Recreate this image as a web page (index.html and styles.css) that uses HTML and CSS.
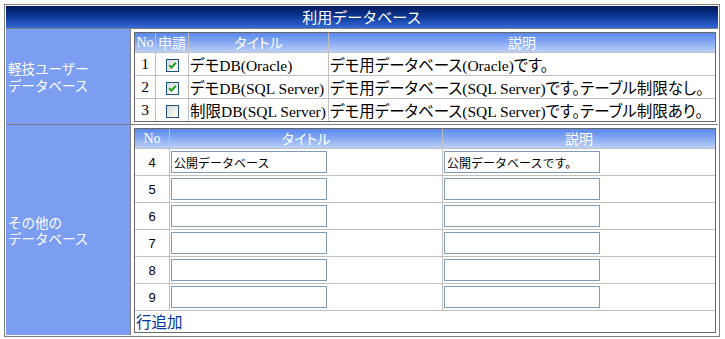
FILE: index.html
```html
<!DOCTYPE html>
<html lang="ja">
<head>
    <meta charset="UTF-8">
    <title>利用データベース</title>
    <link rel="stylesheet" href="styles.css">
</head>
<body>
    <div class="panel">
        <table class="layout">
            <colgroup>
                <col class="col-label">
                <col>
            </colgroup>
            <tr>
                <th class="panel-title" colspan="2">利用データベース</th>
            </tr>
            <tr class="group-first">
                <td class="group-label">軽技ユーザー<br>データベース</td>
                <td class="group-body">
                    <table class="grid">
                        <tr class="grid-head">
                            <th class="col-no">No</th>
                            <th class="col-apply">申請</th>
                            <th class="col-title">タイトル</th>
                            <th>説明</th>
                        </tr>
                        <tr class="row-db">
                            <td class="num">1</td>
                            <td class="center"><span class="box"><svg viewBox="0 0 11 11" width="11" height="11"><path d="M2.2 5.2 L4.4 7.6 L8.8 2.8" /></svg></span></td>
                            <td>デモDB(Oracle)</td>
                            <td>デモ用データベース(Oracle)です。</td>
                        </tr>
                        <tr class="row-db">
                            <td class="num">2</td>
                            <td class="center"><span class="box"><svg viewBox="0 0 11 11" width="11" height="11"><path d="M2.2 5.2 L4.4 7.6 L8.8 2.8" /></svg></span></td>
                            <td>デモDB(SQL Server)</td>
                            <td>デモ用データベース(SQL Server)です。テーブル制限なし。</td>
                        </tr>
                        <tr class="row-db">
                            <td class="num">3</td>
                            <td class="center"><span class="box"></span></td>
                            <td>制限DB(SQL Server)</td>
                            <td>デモ用データベース(SQL Server)です。テーブル制限あり。</td>
                        </tr>
                    </table>
                </td>
            </tr>
            <tr class="group-second">
                <td class="group-label">その他の<br>データベース</td>
                <td class="group-body">
                    <table class="grid">
                        <tr class="grid-head">
                            <th class="col-no2">No</th>
                            <th class="col-half">タイトル</th>
                            <th>説明</th>
                        </tr>
                        <tr class="row-edit">
                            <td class="num2">4</td>
                            <td><input class="field" type="text" value="公開データベース"></td>
                            <td><input class="field" type="text" value="公開データベースです。"></td>
                        </tr>
                        <tr class="row-edit">
                            <td class="num2">5</td>
                            <td><input class="field" type="text"></td>
                            <td><input class="field" type="text"></td>
                        </tr>
                        <tr class="row-edit">
                            <td class="num2">6</td>
                            <td><input class="field" type="text"></td>
                            <td><input class="field" type="text"></td>
                        </tr>
                        <tr class="row-edit">
                            <td class="num2">7</td>
                            <td><input class="field" type="text"></td>
                            <td><input class="field" type="text"></td>
                        </tr>
                        <tr class="row-edit">
                            <td class="num2">8</td>
                            <td><input class="field" type="text"></td>
                            <td><input class="field" type="text"></td>
                        </tr>
                        <tr class="row-edit">
                            <td class="num2">9</td>
                            <td><input class="field" type="text"></td>
                            <td><input class="field" type="text"></td>
                        </tr>
                        <tr class="row-add">
                            <td colspan="3"><a href="#" class="add-row">行追加</a></td>
                        </tr>
                    </table>
                </td>
            </tr>
        </table>
    </div>
</body>
</html>
```

FILE: styles.css
```css
:root {
    --frame: #808080;
    --grid-edge: #686868;
    --grid-line: #c0c0c0;
    --label-bg: #7b9ef2;
    --link: #0033a0;
}

* {
    box-sizing: border-box;
}

body {
    margin: 4px;
    background: #ffffff;
    font-family: "Liberation Serif", "Noto Sans CJK JP", serif;
    font-size: 15.5px;
    color: #000000;
}

/* outer frame */
.panel {
    width: 716px;
    border: 1px solid var(--frame);
    padding: 1px;
    background: #ffffff;
}

.layout {
    width: 100%;
    border-collapse: separate;
    border-spacing: 0;
    table-layout: fixed;
}

.col-label {
    width: 125px;
}

.panel-title {
    height: 22px;
    padding: 0;
    background: linear-gradient(#011a5c, #0b3590 45%, #2556c0 80%, #3669d4);
    color: #ffffff;
    font-family: "Noto Sans CJK JP", sans-serif;
    font-size: 15px;
    font-weight: normal;
    line-height: 22px;
    text-align: center;
}

.group-label,
.group-body {
    border-top: 1px solid var(--frame);
}

.group-first {
    height: 96px;
}

.group-second {
    height: 210px;
}

.group-label {
    padding: 0 0 0 2px;
    background: var(--label-bg);
    border-right: 1px solid var(--frame);
    color: #ffffff;
    font-family: "Noto Sans CJK JP", sans-serif;
    font-size: 13.5px;
    line-height: 16.5px;
    vertical-align: middle;
}

.group-body {
    padding: 3px 2px 2px 3px;
    vertical-align: top;
}

/* inner grids */
.grid {
    width: 100%;
    border: 1px solid var(--grid-edge);
    border-collapse: separate;
    border-spacing: 0;
    table-layout: fixed;
}

.grid th,
.grid td {
    padding: 0 0 0 1px;
    border-left: 1px solid var(--grid-line);
    border-top: 1px solid var(--grid-line);
    white-space: nowrap;
    overflow: hidden;
    vertical-align: middle;
    font-feature-settings: "palt";
}

.grid th:first-child,
.grid td:first-child {
    border-left: none;
}

.grid-head th {
    border-top: none;
    height: 19px;
    padding: 0;
    background: linear-gradient(#5a88ec, #86a9f2 50%, #bcd1f7);
    color: #ffffff;
    font-family: "Noto Sans CJK JP", sans-serif;
    font-size: 14px;
    font-weight: normal;
    line-height: 19px;
    text-align: center;
}

.grid-head .col-no,
.grid-head .col-no2 {
    font-family: "Liberation Serif", serif;
}

.col-no { width: 20px; }
.col-apply { width: 33px; }
.col-title { width: 140px; }
.col-no2 { width: 34px; }
.col-half { width: 273px; }

.row-db {
    height: 23px;
}

.row-edit {
    height: 27px;
}

.row-add {
    height: 21px;
}

.grid td.num,
.grid td.num2,
.grid td.center {
    padding: 0;
    text-align: center;
}

.num2 {
    font-family: "Liberation Sans", sans-serif;
    font-size: 13px;
}

/* checkbox */
.box {
    display: inline-block;
    width: 13px;
    height: 13px;
    border: 1px solid #1c5180;
    background: linear-gradient(135deg, #d8d8d2, #f4f4f0 70%, #ffffff);
    vertical-align: middle;
}

.box svg {
    display: block;
}

.box path {
    fill: none;
    stroke: #21a121;
    stroke-width: 2;
}

.field {
    display: block;
    width: 156px;
    height: 22px;
    margin: 0;
    padding: 0 2px;
    border: 1px solid #7f9db9;
    background: #ffffff;
    font-family: "Noto Sans CJK JP", sans-serif;
    font-size: 12px;
    color: #000000;
    outline: none;
}

.add-row {
    color: var(--link);
    text-decoration: none;
    font-family: "Noto Sans CJK JP", sans-serif;
    font-size: 15.5px;
    line-height: 20px;
}
```
